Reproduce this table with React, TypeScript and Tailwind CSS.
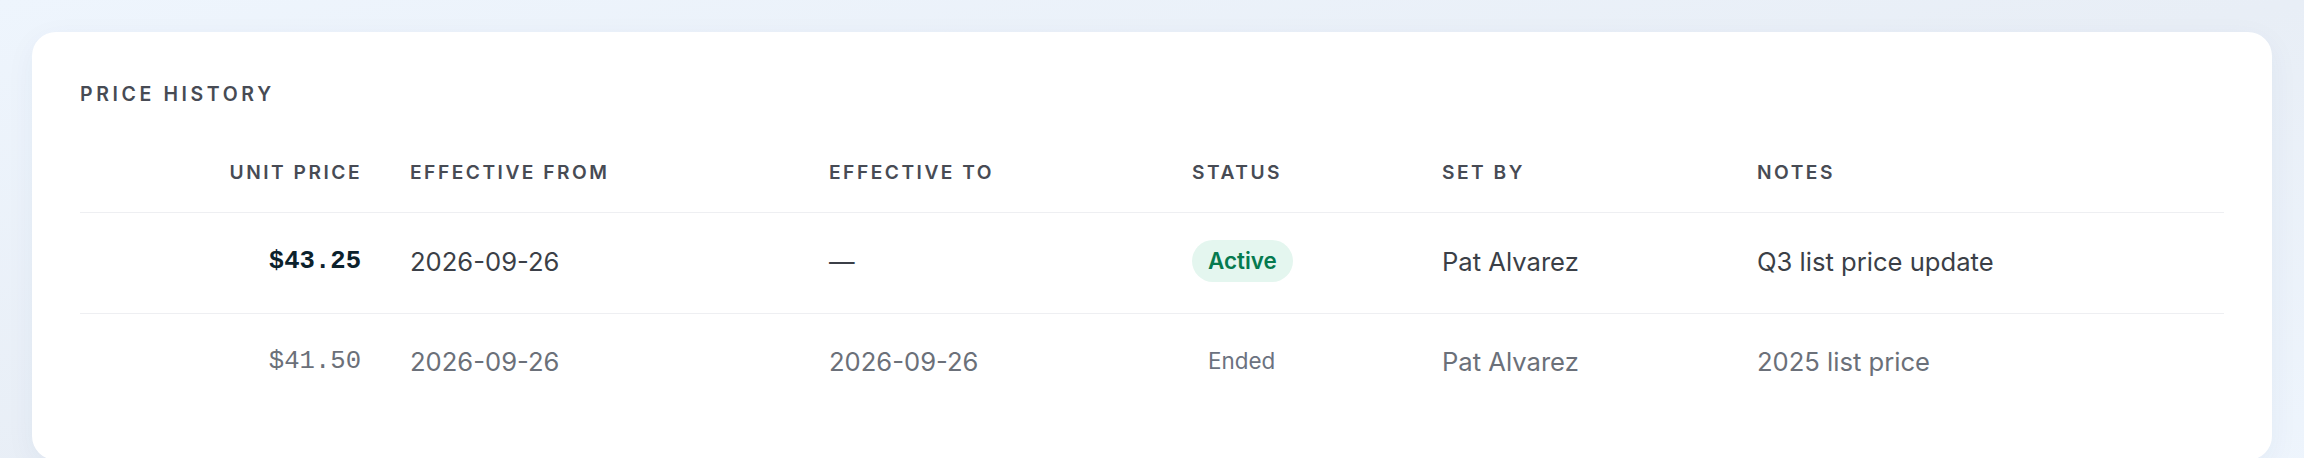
import clsx from "clsx";

interface PriceRow {
  id: string;
  price: string;
  from: string;
  to: string;
  status: "Active" | "Ended";
  setBy: string;
  notes: string;
}

const ROWS: PriceRow[] = [
  { id: "p1", price: "$43.25", from: "2026-09-26", to: "—", status: "Active", setBy: "Pat Alvarez", notes: "Q3 list price update" },
  { id: "p2", price: "$41.50", from: "2026-09-26", to: "2026-09-26", status: "Ended", setBy: "Pat Alvarez", notes: "2025 list price" },
];

const GRID = "grid grid-cols-[306px_419px_363px_250px_315px_491px]";

function StatusBadge({ status }: { status: PriceRow["status"] }) {
  const active = status === "Active";
  return (
    <span
      className={
        active
          ? "inline-block rounded-full bg-[#e4f6ef] px-4 py-2 text-[22.4px] font-semibold leading-[26px] text-[#067a4f]"
          : "inline-block rounded-full px-4 py-2 text-[22.4px] font-normal leading-[26px] text-[#6b7280]"
      }
    >
      {status}
    </span>
  );
}

export default function App() {
  return (
    <div className="min-h-[458px] bg-gradient-to-br from-[#eef5fd] via-[#e8eef6] to-[#eef5fd] p-8 font-['Inter',sans-serif]">
      <div className="rounded-3xl bg-white px-12 pt-12 pb-12 shadow-[0_8px_30px_rgba(30,60,110,0.05)]">
        <h2 className="mb-[49px] text-[19.5px] font-semibold uppercase leading-[29px] tracking-[0.185em] text-[#474b54]">
          Price History
        </h2>

        <div className={clsx(GRID, "border-b border-[#eeeff2] pb-[25px] text-[19.2px] font-semibold uppercase leading-[29px] tracking-[0.13em] text-[#474b54]")}>
          <div className="px-6 text-right">Unit Price</div>
          <div className="px-6">Effective From</div>
          <div className="px-6">Effective To</div>
          <div className="px-6">Status</div>
          <div className="px-6">Set By</div>
          <div className="px-6">Notes</div>
        </div>

        {ROWS.map((row, i) => {
          const ended = row.status === "Ended";
          return (
            <div
              key={row.id}
              className={clsx(
                GRID,
                "items-center text-[25.6px] leading-[35px]",
                i < ROWS.length - 1 ? "border-b border-[#eeeff2] pt-[27px] pb-[31px]" : "pt-[26px] pb-[30px]",
                ended ? "text-[#6b7079]" : "text-[#3b3f47]"
              )}
            >
              <div
                className={clsx(
                  "pl-6 pr-[25px] text-right font-['Liberation_Mono',monospace]",
                  ended ? "text-[#6b7079]" : "font-bold text-[#0c222d]"
                )}
              >
                {row.price}
              </div>
              <div className="px-6">{row.from}</div>
              <div className="px-6">{row.to}</div>
              <div className="px-6">
                <StatusBadge status={row.status} />
              </div>
              <div className="px-6">{row.setBy}</div>
              <div className="px-6">{row.notes}</div>
            </div>
          );
        })}
      </div>
    </div>
  );
}
